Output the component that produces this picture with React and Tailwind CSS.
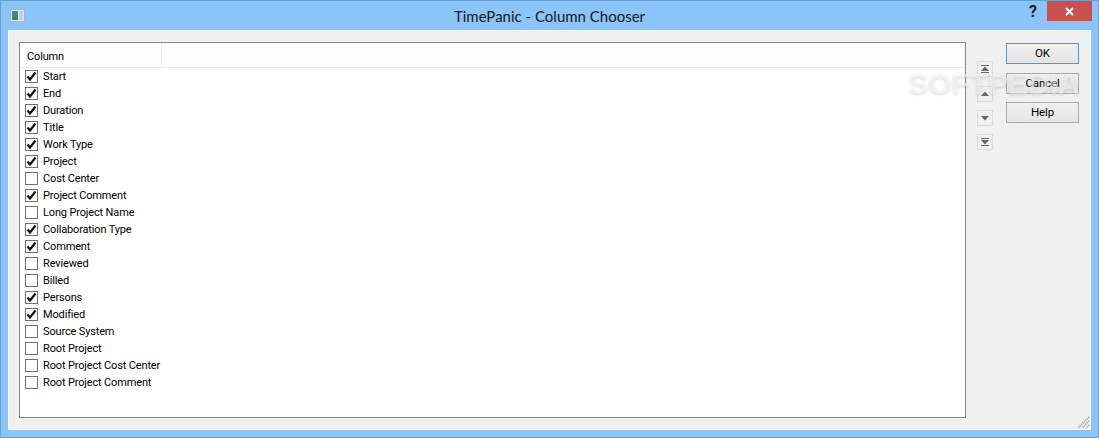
const columns = [
  { name: "Start", checked: true },
  { name: "End", checked: true },
  { name: "Duration", checked: true },
  { name: "Title", checked: true },
  { name: "Work Type", checked: true },
  { name: "Project", checked: true },
  { name: "Cost Center", checked: false },
  { name: "Project Comment", checked: true },
  { name: "Long Project Name", checked: false },
  { name: "Collaboration Type", checked: true },
  { name: "Comment", checked: true },
  { name: "Reviewed", checked: false },
  { name: "Billed", checked: false },
  { name: "Persons", checked: true },
  { name: "Modified", checked: true },
  { name: "Source System", checked: false },
  { name: "Root Project", checked: false },
  { name: "Root Project Cost Center", checked: false },
  { name: "Root Project Comment", checked: false },
];

const AppIcon = () => (
  <div className="flex h-[13px] w-[15px] items-center gap-px rounded-[2px] border border-[#a9b4c0] bg-[#e4e8ea] p-px">
    <div className="h-[9px] w-[7px] bg-gradient-to-b from-[#3f8f9c] to-[#2f8a5f]" />
    <div className="h-[9px] w-[4px] bg-[#c4d0d6]" />
  </div>
);

const CheckBox = ({ checked }) => (
  <div className="flex h-[13px] w-[13px] shrink-0 items-center justify-center border border-[#707070] bg-white">
    {checked && (
      <svg width="11" height="11" viewBox="0 0 11 11">
        <path d="M1.5 5.5 L4 8.5 L9.5 1.5" fill="none" stroke="#111" strokeWidth="2.2" />
      </svg>
    )}
  </div>
);

const ArrowButton = ({ dir, bar, className }) => (
  <div className={`flex h-[16px] w-[16px] items-center justify-center border border-[#dcdcdc] bg-[#f0f0f0] ${className}`}>
    <svg width="10" height="8" viewBox="0 0 10 8">
      {dir === "up" ? (
        <>
          {bar && <rect x="1" y="0" width="8" height="1" fill="#666" />}
          <path d="M5 1.5 L9 6 H1 Z" fill="#666" />
          {bar && <rect x="1" y="7" width="8" height="1" fill="#666" />}
        </>
      ) : (
        <>
          {bar && <rect x="1" y="0" width="8" height="1" fill="#666" />}
          <path d="M1 2 H9 L5 6.5 Z" fill="#666" />
          {bar && <rect x="1" y="7" width="8" height="1" fill="#666" />}
        </>
      )}
    </svg>
  </div>
);

const DialogButton = ({ label, active }) => (
  <button
    className={`h-[21px] w-[73px] border bg-gradient-to-b from-[#f0f0f0] to-[#e5e5e5] pt-px text-[11.5px] tracking-[-0.15px] text-black ${
      active ? "border-[#3c9de8]" : "border-[#acacac]"
    }`}
  >
    {label}
  </button>
);

const App = () => {
  return (
    <div
      className="flex h-[438px] w-[1099px] flex-col border border-[#6c9fd2] bg-[#8ac4f9] text-black"
      style={{ fontFamily: "Roboto, sans-serif" }}
    >
      <div className="grid h-[29px] shrink-0 grid-cols-[1fr_auto_1fr]">
        <div className="pl-[9px] pt-[8px]">
          <AppIcon />
        </div>
        <div className="pt-[5px] text-[15px] leading-[20px] text-[#1a1a1a]" style={{ fontFamily: "Lato, sans-serif" }}>
          TimePanic - Column Chooser
        </div>
        <div className="flex justify-end pr-[6px]">
          <div className="mr-[10px] pt-px text-[16px] font-bold leading-[20px] text-[#222]">?</div>
          <div className="flex h-[20px] w-[45px] items-center justify-center bg-[#c75050]">
            <svg width="9" height="9" viewBox="0 0 9 9">
              <path d="M1 1 L8 8 M8 1 L1 8" stroke="#fff" strokeWidth="2" />
            </svg>
          </div>
        </div>
      </div>

      <div className="relative mx-[7px] mb-[7px] flex min-h-0 flex-1 border border-[#f8fbff] bg-[#f0f0f0] pb-[11px] pl-[10px] pr-[11px] pt-[11px]">
        <div className="flex w-[947px] flex-col border border-[#828790] bg-white">
          <div className="flex h-[25px] shrink-0 border-b border-[#e5eef7] bg-[#fdfdfe]">
            <div className="flex w-[142px] items-center border-r border-[#e5eef7] pl-[7px] pt-[4px] text-[11px] tracking-[-0.15px]">Column</div>
          </div>
          <div className="flex flex-col pl-[5px]">
            {columns.map((column) => (
              <div key={column.name} className="flex h-[17px] items-center gap-[5px]">
                <CheckBox checked={column.checked} />
                <span className="whitespace-nowrap text-[11px] leading-[17px] tracking-[-0.15px]">{column.name}</span>
              </div>
            ))}
          </div>
        </div>

        <div className="ml-[11px] flex w-[16px] flex-col pt-[19px]">
          <ArrowButton dir="up" bar />
          <ArrowButton dir="up" className="mt-[9px]" />
          <ArrowButton dir="down" className="mt-[8px]" />
          <ArrowButton dir="down" bar className="mt-[8px]" />
        </div>

        <div className="ml-[13px] flex flex-col pt-px">
          <DialogButton label="OK" active />
          <div className="mt-[9px] flex flex-col gap-[8px]">
            <DialogButton label="Cancel" />
            <DialogButton label="Help" />
          </div>
        </div>

        {/* watermark */}
        <div
          className="pointer-events-none absolute left-[899px] top-[35px] text-[30px] font-bold leading-[36px] text-white/50 [text-shadow:0_1px_3px_rgba(0,0,0,0.14)]"
          style={{ fontFamily: '"Liberation Sans", sans-serif' }}
        >
          SOFTPEDIA
        </div>

        <svg className="absolute bottom-0 right-0" width="13" height="13" viewBox="0 0 13 13">
          <path d="M12 1 L1 12 M12 5 L5 12 M12 9 L9 12" stroke="#a5a5a5" strokeWidth="2" strokeDasharray="1 1" />
        </svg>
      </div>
    </div>
  );
};

export default App;
